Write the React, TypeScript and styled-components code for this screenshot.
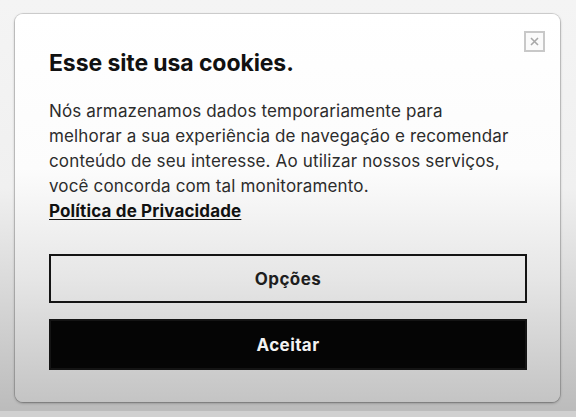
import React from "react";
import styled, { createGlobalStyle } from "styled-components";

const Global = createGlobalStyle`
  html, body { margin: 0; padding: 0; }
  body { font-family: Inter, "Noto Sans", sans-serif; }
`;

const Page = styled.div`
  width: 576px;
  height: 417px;
  box-sizing: border-box;
  display: flex;
  flex-direction: column;
  background: linear-gradient(
    to bottom,
    #f4f4f4 0%,
    #f0f0f0 45%,
    #d8d8d8 70%,
    #bcbcbc 98%
  );
`;

const Stage = styled.div`
  flex: 1;
  padding: 14px 16px 0 15px;
`;

const BottomStrip = styled.div`
  height: 6px;
  background: #d0d0d0;
`;

const Card = styled.div`
  position: relative;
  box-sizing: border-box;
  width: 545px;
  height: 388px;
  border-radius: 8px;
  padding: 35px 33px 0 34px;
  display: flex;
  flex-direction: column;
  background: linear-gradient(
    to bottom,
    #ffffff 0%,
    #fcfcfc 40%,
    #e6e6e6 68%,
    #c4c4c4 100%
  );
  box-shadow: 0 0 0 1px rgba(0, 0, 0, 0.12), 0 1px 3px rgba(0, 0, 0, 0.35);
`;

const Close = styled.button`
  position: absolute;
  top: 17px;
  right: 15px;
  width: 21px;
  height: 21px;
  box-sizing: border-box;
  border: 2px solid #c8c8c8;
  background: #fafafa;
  padding: 0;
  display: flex;
  align-items: center;
  justify-content: center;
  cursor: pointer;
`;

const Title = styled.h2`
  margin: 0;
  font-family: Inter, sans-serif;
  font-weight: 700;
  font-size: 23px;
  line-height: 28px;
  color: #111;
  letter-spacing: -0.1px;
`;

const Body = styled.p`
  margin: 22px 0 0;
  font-family: Inter, sans-serif;
  font-size: 17px;
  line-height: 25px;
  color: #2c2c2c;
  letter-spacing: 0.15px;
`;

const PolicyLink = styled.a`
  display: block;
  font-weight: 700;
  color: #111;
  text-decoration: underline;
  text-underline-offset: 2px;
`;

const Actions = styled.div`
  margin-top: 30px;
  display: flex;
  flex-direction: column;
  gap: 16px;
`;

const Button = styled.button<{ $primary?: boolean }>`
  box-sizing: border-box;
  width: 100%;
  height: ${(p) => (p.$primary ? "51px" : "49px")};
  border: 2px solid #141414;
  background: ${(p) => (p.$primary ? "#050505" : "transparent")};
  color: ${(p) => (p.$primary ? "#f2f2f2" : "#1e1e1e")};
  font-family: Inter, sans-serif;
  font-weight: 700;
  font-size: 17px;
  letter-spacing: 0.4px;
  cursor: pointer;
`;

export default function App() {
  return (
    <>
      <Global />
      <Page>
        <Stage>
          <Card>
            <Close aria-label="Fechar">
              <svg width="9" height="9" viewBox="0 0 9 9">
                <path d="M1 1 L8 8 M8 1 L1 8" stroke="#a8a8a8" strokeWidth="1.6" />
              </svg>
            </Close>
            <Title>Esse site usa cookies.</Title>
            <Body>
              Nós armazenamos dados temporariamente para
              <br />
              melhorar a sua experiência de navegação e recomendar
              <br />
              conteúdo de seu interesse. Ao utilizar nossos serviços,
              <br />
              você concorda com tal monitoramento.
              <PolicyLink href="#">Política de Privacidade</PolicyLink>
            </Body>
            <Actions>
              <Button>Opções</Button>
              <Button $primary>Aceitar</Button>
            </Actions>
          </Card>
        </Stage>
        <BottomStrip />
      </Page>
    </>
  );
}
